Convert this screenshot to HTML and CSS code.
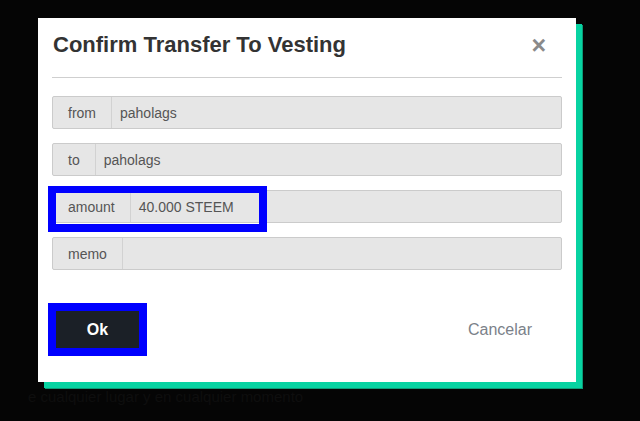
FILE: index.html
```html
<!DOCTYPE html>
<html lang="es">
<head>
  <meta charset="UTF-8">
  <title>Confirm Transfer To Vesting</title>
  <link rel="stylesheet" href="styles.css">
</head>
<body>

<div class="modal">
  <div class="modal-header">
    <h2>Confirm Transfer To Vesting</h2>
    <span class="close">&times;</span>
  </div>
  <hr>

  <div class="field">
    <span class="field-label">from</span>
    <span class="field-value">paholags</span>
  </div>
  <div class="field">
    <span class="field-label">to</span>
    <span class="field-value">paholags</span>
  </div>
  <div class="field">
    <span class="field-label">amount</span>
    <span class="field-value">40.000 STEEM</span>
    <span class="mark"></span>
  </div>
  <div class="field">
    <span class="field-label">memo</span>
    <span class="field-value"></span>
  </div>

  <div class="modal-footer">
    <button class="ok-btn">Ok</button>
    <button class="cancel-btn">Cancelar</button>
  </div>
</div>

<p class="behind">e cualquier lugar y en cualquier momento</p>

</body>
</html>
```

FILE: styles.css
```css
body {
  margin: 0;
  background: #050505;
  font-family: "Liberation Sans", Arial, sans-serif;
  padding: 18px 0 0 38px;
  overflow: hidden;
}
.modal {
  width: 538px;
  height: 364px;
  box-sizing: border-box;
  background: #fff;
  padding: 14px 14px 0 14px;
  box-shadow: 6px 6px 0 #07d3a2, 7px 7px 0 #0b9b77;
}
.modal-header {
  display: flex;
  justify-content: space-between;
  align-items: flex-start;
  padding-left: 1px;
}
h2 {
  margin: 0;
  font-size: 22px;
  line-height: 26px;
  font-weight: bold;
  color: #333;
}
.close {
  font-size: 25px;
  line-height: 20px;
  font-weight: bold;
  color: #8a8a8a;
  margin: 3px 16px 0 0;
}
hr {
  border: none;
  border-top: 1px solid #cfcfcf;
  margin: 19px 0 18px 0;
}
.field {
  position: relative;
  display: flex;
  height: 33px;
  box-sizing: border-box;
  border: 1px solid #cbcbcb;
  border-radius: 2px;
  background: #e6e6e6;
  margin-bottom: 14px;
  font-size: 14px;
  color: #555;
}
.field-label {
  display: flex;
  align-items: center;
  padding: 0 15px;
  border-right: 1px solid #d2d2d2;
}
.field-value {
  display: flex;
  align-items: center;
  padding-left: 8px;
}
.mark {
  position: absolute;
  left: -5px;
  top: -5px;
  width: 219px;
  height: 46px;
  box-sizing: border-box;
  border: 8px solid #0000ff;
  border-top-width: 7px;
}
.modal-footer {
  display: flex;
  justify-content: space-between;
  align-items: center;
  margin-top: 41px;
  padding: 0 30px 0 4px;
}
.ok-btn {
  width: 83px;
  height: 37px;
  margin: 0;
  border: none;
  background: #1b2027;
  color: #fff;
  font-family: inherit;
  font-size: 16px;
  font-weight: bold;
  outline: 8px solid #0000ff;
}
.cancel-btn {
  border: none;
  background: none;
  color: #7b8189;
  font-family: inherit;
  font-size: 16px;
  padding: 0;
}
.behind {
  margin: 6px 0 0 -10px;
  font-size: 15px;
  color: #0e0e0e;
}
```
